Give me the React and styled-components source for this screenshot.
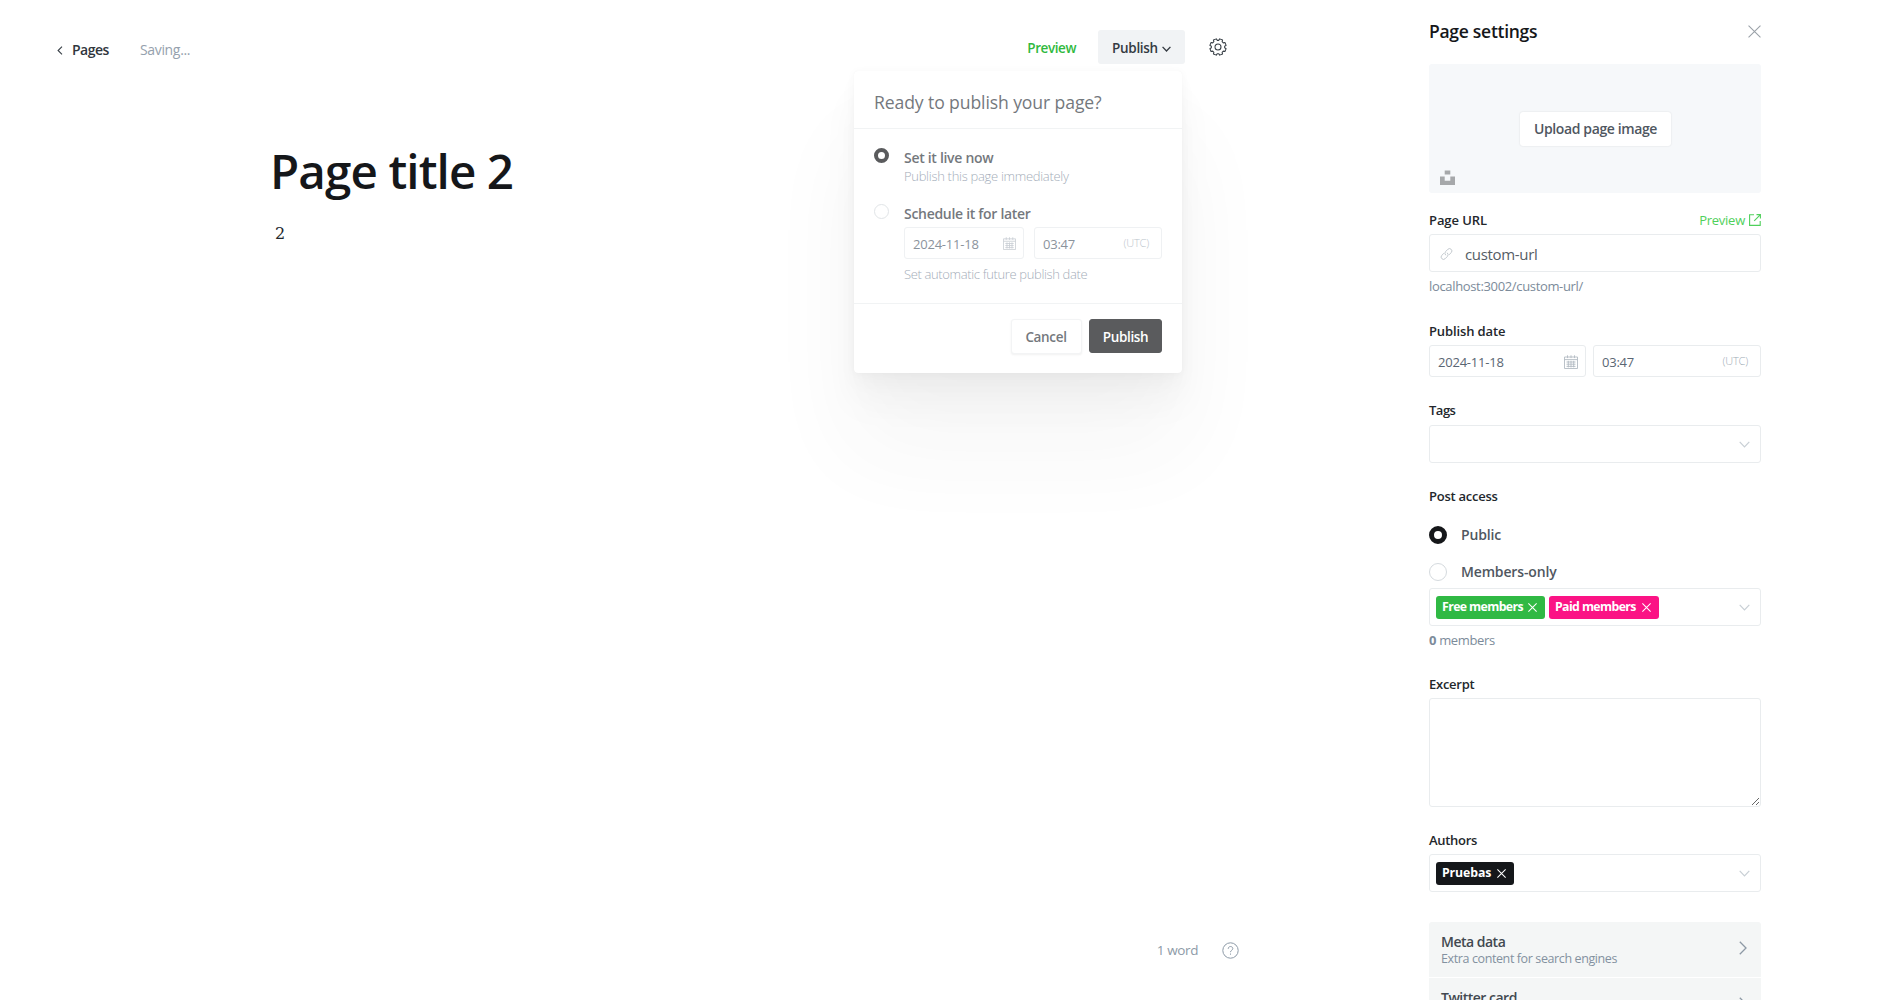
import React from "react";
import styled, { createGlobalStyle, css } from "styled-components";

const GlobalStyle = createGlobalStyle`
  *, *::before, *::after { box-sizing: border-box; }
  body {
    margin: 0;
    overflow: hidden;
    background: #fff;
    color: #15171a;
    font-family: "Open Sans", "Noto Sans", sans-serif;
    font-size: 14px;
    line-height: 20px;
  }
  button { font: inherit; cursor: pointer; }
`;

const Screen = styled.div`
  display: flex;
  height: 1000px;
  overflow: hidden;
`;

/* Editor */

const Editor = styled.main`
  display: flex;
  flex-direction: column;
  width: 1270px;
  flex: none;
`;

const Header = styled.header`
  position: relative;
  display: flex;
  justify-content: space-between;
  align-items: flex-start;
  padding: 30px 43px 0 57px;
  height: 140px;
`;

const Breadcrumb = styled.div`
  display: flex;
  align-items: center;
  margin-top: 10px;
  white-space: nowrap;
`;

const BackLink = styled.a`
  display: flex;
  align-items: center;
  gap: 9px;
  width: 83px;
  color: #30363d;
  font-weight: 540;
  letter-spacing: -0.5px;
`;

const SaveStatus = styled.span`
  color: #95a1ad;
  letter-spacing: -0.34px;
`;

const HeaderActions = styled.div`
  display: flex;
  align-items: center;
  height: 34px;
`;

const PreviewLink = styled.a`
  margin: 1px 22px 0 0;
  color: #30b93e;
  font-size: 13.5px;
  font-weight: 600;
  letter-spacing: -0.43px;
`;

const PublishTrigger = styled.button`
  display: flex;
  align-items: center;
  gap: 4px;
  width: 87px;
  height: 34px;
  padding: 1px 0 0 14px;
  border: 0;
  border-radius: 3px;
  background: #f1f3f5;
  color: #343a42;
  font-size: 13.5px;
  font-weight: 600;
  letter-spacing: -0.3px;

  svg { margin-top: 2px; }
`;

const GearButton = styled.button`
  display: flex;
  margin-left: 24px;
  padding: 0;
  border: 0;
  background: none;
  color: #394047;
`;

const Canvas = styled.section`
  flex: 1;
  padding: 0 270px;
`;

const Title = styled.h1`
  margin: 0;
  color: #15171a;
  font-size: 47.5px;
  font-weight: 570;
  line-height: 61px;
  letter-spacing: -0.88px;
`;

const Body = styled.p`
  margin: 18px 0 0 5px;
  color: #22272d;
  font-family: "DejaVu Serif", serif;
  font-size: 16px;
  line-height: 30px;
`;

const StatusBar = styled.footer`
  display: flex;
  justify-content: flex-end;
  align-items: center;
  gap: 24px;
  height: 100px;
  padding-right: 31px;
  color: #8d9aa7;
  font-size: 13.5px;
  letter-spacing: -0.4px;
`;

/* Publish menu */

const PublishMenu = styled.div`
  position: absolute;
  z-index: 2;
  top: 71px;
  left: 854px;
  width: 328px;
  height: 302px;
  border-radius: 4px;
  background: #fff;
  opacity: 0.7;
  box-shadow:
    0 0 1px rgba(0, 0, 0, 0.06),
    0 1px 8px rgba(0, 0, 0, 0.04),
    0 10px 18px rgba(0, 0, 0, 0.03),
    0 30px 36px rgba(0, 0, 0, 0.045),
    0 74px 94px rgba(0, 0, 0, 0.05);
`;

const MenuTitle = styled.h2`
  margin: 0;
  height: 58px;
  padding: 17px 20px 0;
  border-bottom: 1px solid #eceef0;
  color: #394047;
  font-size: 17.6px;
  font-weight: 400;
  line-height: 29px;
  letter-spacing: -0.11px;
`;

const MenuOptions = styled.div`
  height: 175px;
  padding: 19px 20px 0;
  border-bottom: 1px solid #eceef0;
`;

const MenuOption = styled.div`
  display: flex;
  align-items: flex-start;
  height: 56px;
`;

const OptionContent = styled.div`
  width: 258px;
  margin-left: 15px;
`;

const OptionTitle = styled.div`
  color: #394047;
  font-weight: 600;
  line-height: 19px;
  letter-spacing: -0.3px;
`;

const OptionHint = styled.div`
  color: #7c8a9b;
  font-size: 13px;
  font-weight: 300;
  line-height: 18px;
  letter-spacing: ${(p) => p.$spacing}px;
`;

const ScheduleFields = styled.div`
  display: flex;
  flex-direction: column;
  gap: 6px;
  margin-top: 4px;
`;

const MenuFooter = styled.div`
  display: flex;
  justify-content: flex-end;
  gap: 7px;
  padding: 15px 20px 0;
`;

const MenuButton = styled.button`
  width: ${(p) => (p.$primary ? 73 : 71)}px;
  height: ${(p) => (p.$primary ? 34 : 35)}px;
  padding: ${(p) => (p.$primary ? "1px 0 0" : "0 1px 0 0")};
  border: 1px solid ${(p) => (p.$primary ? "#15171a" : "#eef0f2")};
  border-radius: 3px;
  background: ${(p) => (p.$primary ? "#15171a" : "#fff")};
  color: ${(p) => (p.$primary ? "#fff" : "#394047")};
  font-size: 13.5px;
  font-weight: 600;
  letter-spacing: -0.33px;
  ${(p) => !p.$primary && css`box-shadow: 0 1px 2px rgba(0, 0, 0, 0.08);`}
`;

/* Shared form parts */

const RadioDot = styled.span`
  flex: none;
  width: ${(p) => p.$size}px;
  height: ${(p) => p.$size}px;
  border-radius: 50%;
  border: ${(p) =>
    p.$checked ? `${p.$size > 16 ? 5 : 4.6}px solid #15171a` : "1px solid #d5dade"};
  background: #fff;
`;

const DateRow = styled.div`
  display: flex;
  justify-content: space-between;
  width: ${(p) => p.$width}px;
`;

const DateBox = styled.div`
  display: flex;
  align-items: center;
  justify-content: space-between;
  width: ${(p) => p.$width}px;
  height: 32px;
  padding: 1px ${(p) => p.$right}px 0 8px;
  border: 1px solid #e9ecee;
  border-radius: 3px;
  color: #5a6673;
  font-size: 13px;
  letter-spacing: -0.22px;
`;

const Zone = styled.span`
  margin-top: -2px;
  color: #a0abb6;
  font-size: 11px;
  font-weight: 300;
  letter-spacing: -0.2px;
`;

/* Settings panel */

const Settings = styled.aside`
  width: 332px;
  margin-left: 159px;
  flex: none;
`;

const SettingsHeader = styled.div`
  display: flex;
  align-items: center;
  justify-content: space-between;
  height: 64px;
  color: #15171a;

  svg { margin-bottom: 1px; }
`;

const SettingsTitle = styled.h2`
  margin: 0 0 2px;
  font-size: 17.5px;
  font-weight: 600;
  letter-spacing: -0.28px;
`;

const ImageDrop = styled.div`
  display: flex;
  flex-direction: column;
  align-items: center;
  height: 129px;
  padding-top: 48px;
  border-radius: 3px;
  background: #f6f8fa;
`;

const UploadButton = styled.button`
  width: 151px;
  height: 34px;
  padding: 0 0 0 1px;
  border: 0;
  border-radius: 3px;
  background: #fff;
  box-shadow: 0 0 2px rgba(0, 0, 0, 0.12);
  color: #50575f;
  font-weight: 600;
  letter-spacing: -0.38px;
`;

const SourceIcon = styled.span`
  display: flex;
  align-self: flex-start;
  margin: 24px 0 0 11px;
`;

const Field = styled.div`
  margin-top: ${(p) => p.$top}px;
`;

const LabelRow = styled.div`
  display: flex;
  justify-content: space-between;
  height: ${(p) => p.$height || 24}px;
`;

const Label = styled.label`
  color: #23272c;
  font-size: 13px;
  font-weight: 600;
  letter-spacing: ${(p) => p.$spacing ?? -0.25}px;
`;

const UrlPreview = styled.a`
  display: flex;
  gap: 4px;
  color: #4fd05b;
  font-size: 13px;
  letter-spacing: -0.25px;

  svg { margin-top: 4px; }
`;

const InputBox = styled.div`
  display: flex;
  align-items: center;
  height: 38px;
  padding: ${(p) => p.$padding || "0 10px 0 6px"};
  border: 1px solid #e9ecee;
  border-radius: 3px;
  gap: ${(p) => p.$gap || 4}px;
  color: #555d66;
  font-size: 15px;
  letter-spacing: -0.33px;
`;

const Spacer = styled.span`
  flex: 1;
`;

const FieldNote = styled.div`
  margin-top: 4px;
  color: #7c8b9a;
  font-size: 13px;
  letter-spacing: -0.34px;
`;

const AccessOption = styled.div`
  display: flex;
  align-items: center;
  gap: 14px;
  height: 20px;
  margin-top: ${(p) => p.$top}px;
  color: #50575f;
  font-weight: 600;
  letter-spacing: -0.15px;
`;

const Token = styled.span`
  display: flex;
  align-items: center;
  justify-content: space-between;
  width: ${(p) => p.$width}px;
  height: 23px;
  padding: 0 8px 0 6px;
  border-radius: 3px;
  background: ${(p) => p.$color};
  color: #fff;
  font-size: 12.3px;
  font-weight: 700;
  letter-spacing: ${(p) => p.$spacing ?? -0.6}px;
  white-space: nowrap;
`;

const ExcerptInput = styled.textarea`
  display: block;
  width: 100%;
  height: 109px;
  border: 1px solid #e9ecee;
  border-radius: 3px;
  background: #fff;
  outline: none;
  resize: vertical;
`;

const PanelList = styled.nav`
  margin-top: 30px;
  border-radius: 3px;
  background: #f4f6f6;
`;

const PanelItem = styled.a`
  display: flex;
  justify-content: space-between;
  height: 56px;
  padding: 11px 14px 0 12px;
  border-bottom: 1px solid #fff;

  svg { margin-top: 8px; }
`;

const PanelTitle = styled.div`
  color: #424950;
  font-weight: 600;
  line-height: 17px;
  letter-spacing: -0.5px;
`;

const PanelHint = styled.div`
  color: #8391a0;
  font-size: 12.5px;
  line-height: 17px;
  letter-spacing: -0.39px;
`;

/* Icons */

const ChevronDown = ({ w = 11, h = 7, color = "#c8cfd5", stroke = 1.2 }) => (
  <svg width={w} height={h} viewBox="0 0 11 7" fill="none" stroke={color} strokeWidth={stroke}>
    <path d="M.7.9 5.5 5.8 10.3.9" />
  </svg>
);

const ChevronRight = () => (
  <svg width="8" height="14" viewBox="0 0 8 14" fill="none" stroke="#8d99a5" strokeWidth="1.3">
    <path d="M.8.8 7 7 .8 13.2" />
  </svg>
);

const Cross = ({ size, color, stroke = 1 }) => (
  <svg width={size} height={size} viewBox="0 0 12 12" fill="none" stroke={color} strokeWidth={stroke}>
    <path d="M.5.5l11 11M11.5.5l-11 11" />
  </svg>
);

const BackIcon = () => (
  <svg width="6" height="9" viewBox="0 0 6 9" fill="none" stroke="#394047" strokeWidth="1.1">
    <path d="M5 .6 1.1 4.5 5 8.4" />
  </svg>
);

const gearPath = (() => {
  const points = [];
  for (let i = 0; i < 8; i += 1) {
    const a = (i * Math.PI) / 4 + Math.PI / 8;
    [[-0.27, 6.7], [-0.19, 8.3], [0.19, 8.3], [0.27, 6.7]].forEach(([d, r]) => {
      points.push(`${(9 + r * Math.cos(a + d)).toFixed(2)} ${(9 + r * Math.sin(a + d)).toFixed(2)}`);
    });
  }
  return `M${points.join("L")}Z`;
})();

const GearIcon = () => (
  <svg width="18" height="18" viewBox="0 0 18 18" fill="none" stroke="currentColor" strokeWidth="1.05" strokeLinejoin="round">
    <path d={gearPath} />
    <circle cx="9" cy="9" r="3" />
  </svg>
);

const CalendarIcon = ({ size = 13 }) => (
  <svg width={size} height={size} viewBox="0 0 14 14" fill="none" stroke="#b3bbc3" strokeWidth=".9">
    <path d="M.5 2h13v11.5H.5zM.5 4.6h13M3.5.3v2.8M7 .3v2.8M10.5.3v2.8M2.5 7h9M2.5 9.2h9M2.5 11.4h9M4.3 5.8v6.6M7 5.8v6.6M9.7 5.8v6.6" />
  </svg>
);

const LinkIcon = () => (
  <svg width="13" height="14" viewBox="0 0 24 24" fill="none" stroke="#b9c0c6" strokeWidth="1.6" strokeLinecap="round">
    <path d="M10.2 13.8a4.6 4.6 0 0 1 .3-6.5l4.2-4.2a4.4 4.4 0 0 1 6.2 6.2l-3.6 3.6" />
    <path d="M13.8 10.2a4.6 4.6 0 0 1-.3 6.5l-4.2 4.2a4.4 4.4 0 0 1-6.2-6.2l3.6-3.6" />
  </svg>
);

const ExternalIcon = () => (
  <svg width="12" height="12" viewBox="0 0 12 12" fill="none" stroke="#4fd05b" strokeWidth="1.1">
    <path d="M5 .8H.6v10.6h10.6V7M7.5.6h3.9v3.9M11.2.8 5.2 6.8" />
  </svg>
);

const UnsplashIcon = () => (
  <svg width="15" height="15" viewBox="0 0 15 15" fill="#a6a8aa">
    <path d="M4.7.5h5.6v4H4.7zM0 6.5h4.7v4.2h5.6V6.5H15V15H0z" />
  </svg>
);

const HelpIcon = () => (
  <svg width="17" height="17" viewBox="0 0 17 17" fill="none" stroke="#8d9aa7" strokeWidth="1">
    <circle cx="8.5" cy="8.5" r="7.7" />
    <path d="M6.2 6.8c0-3.1 4.6-2.9 4.6-.2 0 1.7-2.3 1.6-2.3 3.6M8.5 11.5v1.2" />
  </svg>
);

const DateTime = ({ width, dateWidth, timeWidth, iconSize }) => (
  <DateRow $width={width}>
    <DateBox $width={dateWidth} $right={7}>
      2024-11-18
      <CalendarIcon size={iconSize} />
    </DateBox>
    <DateBox $width={timeWidth} $right={12}>
      03:47
      <Zone>(UTC)</Zone>
    </DateBox>
  </DateRow>
);

const Tag = ({ children, color, width, spacing }) => (
  <Token $color={color} $width={width} $spacing={spacing}>
    {children}
    <Cross size={9} color="#fff" stroke={1.4} />
  </Token>
);

export default function App() {
  return (
    <>
      <GlobalStyle />
      <Screen>
        <Editor>
          <Header>
            <Breadcrumb>
              <BackLink><BackIcon />Pages</BackLink>
              <SaveStatus>Saving...</SaveStatus>
            </Breadcrumb>
            <HeaderActions>
              <PreviewLink>Preview</PreviewLink>
              <PublishTrigger>
                Publish
                <ChevronDown w={9} h={6} color="#343a42" stroke={1.7} />
              </PublishTrigger>
              <GearButton aria-label="Settings"><GearIcon /></GearButton>
            </HeaderActions>
            <PublishMenu>
              <MenuTitle>Ready to publish your page?</MenuTitle>
              <MenuOptions>
                <MenuOption>
                  <RadioDot $size={15} $checked />
                  <OptionContent>
                    <OptionTitle>Set it live now</OptionTitle>
                    <OptionHint $spacing={-0.3}>Publish this page immediately</OptionHint>
                  </OptionContent>
                </MenuOption>
                <MenuOption>
                  <RadioDot $size={15} />
                  <OptionContent>
                    <OptionTitle>Schedule it for later</OptionTitle>
                    <ScheduleFields>
                      <DateTime width={258} dateWidth={120} timeWidth={128} />
                      <OptionHint $spacing={-0.36}>Set automatic future publish date</OptionHint>
                    </ScheduleFields>
                  </OptionContent>
                </MenuOption>
              </MenuOptions>
              <MenuFooter>
                <MenuButton>Cancel</MenuButton>
                <MenuButton $primary>Publish</MenuButton>
              </MenuFooter>
            </PublishMenu>
          </Header>
          <Canvas>
            <Title>Page title 2</Title>
            <Body>2</Body>
          </Canvas>
          <StatusBar>
            <span>1 word</span>
            <HelpIcon />
          </StatusBar>
        </Editor>

        <Settings>
          <SettingsHeader>
            <SettingsTitle>Page settings</SettingsTitle>
            <Cross size={13} color="#9aa1a8" />
          </SettingsHeader>
          <ImageDrop>
            <UploadButton>Upload page image</UploadButton>
            <SourceIcon><UnsplashIcon /></SourceIcon>
          </ImageDrop>

          <Field $top={17}>
            <LabelRow>
              <Label $spacing={-0.08}>Page URL</Label>
              <UrlPreview>Preview<ExternalIcon /></UrlPreview>
            </LabelRow>
            <InputBox $padding="2px 10px 0" $gap={12}>
              <LinkIcon />
              custom-url
            </InputBox>
            <FieldNote>localhost:3002/custom-url/</FieldNote>
          </Field>

          <Field $top={25}>
            <LabelRow><Label $spacing={-0.12}>Publish date</Label></LabelRow>
            <DateTime width={332} dateWidth={157} timeWidth={168} iconSize={14} />
          </Field>

          <Field $top={23}>
            <LabelRow $height={25}><Label $spacing={-0.5}>Tags</Label></LabelRow>
            <InputBox><Spacer /><ChevronDown /></InputBox>
          </Field>

          <Field $top={23}>
            <LabelRow $height={20}><Label>Post access</Label></LabelRow>
            <AccessOption $top={19}><RadioDot $size={18} $checked />Public</AccessOption>
            <AccessOption $top={17}><RadioDot $size={18} />Members-only</AccessOption>
          </Field>

          <Field $top={6}>
            <InputBox>
              <Tag color="#30b944" width={109}>Free members</Tag>
              <Tag color="#fb1385" width={110}>Paid members</Tag>
              <Spacer />
              <ChevronDown />
            </InputBox>
            <FieldNote><b>0</b> members</FieldNote>
          </Field>

          <Field $top={24}>
            <LabelRow><Label>Excerpt</Label></LabelRow>
            <ExcerptInput aria-label="Excerpt" />
          </Field>

          <Field $top={23}>
            <LabelRow><Label $spacing={-0.3}>Authors</Label></LabelRow>
            <InputBox>
              <Tag color="#15171a" width={78} spacing={-0.1}>Pruebas</Tag>
              <Spacer />
              <ChevronDown />
            </InputBox>
          </Field>

          <PanelList>
            <PanelItem>
              <div>
                <PanelTitle>Meta data</PanelTitle>
                <PanelHint>Extra content for search engines</PanelHint>
              </div>
              <ChevronRight />
            </PanelItem>
            <PanelItem>
              <PanelTitle>Twitter card</PanelTitle>
              <ChevronRight />
            </PanelItem>
          </PanelList>
        </Settings>
      </Screen>
    </>
  );
}
